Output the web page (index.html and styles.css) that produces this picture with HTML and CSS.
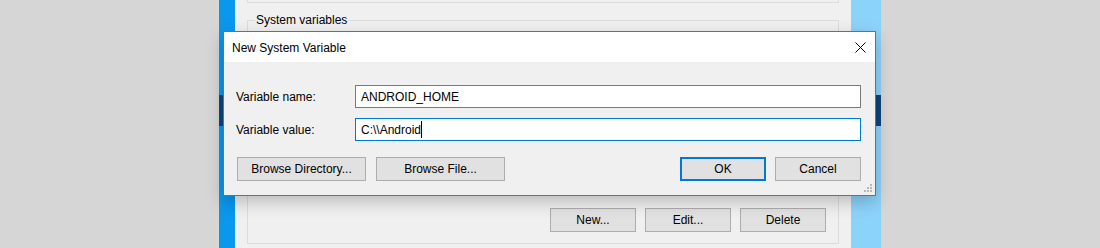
FILE: index.html
```html
<!DOCTYPE html>
<html lang="en">
<head>
  <meta charset="UTF-8">
  <title>New System Variable</title>
  <link rel="stylesheet" href="styles.css">
</head>
<body>
  <div class="desktop">
    <div class="window">
      <div class="prev-group"></div>
      <fieldset class="group">
        <legend>System variables</legend>
        <div class="var-list"></div>
        <div class="group-buttons">
          <button class="win-btn small">New...</button>
          <button class="win-btn small">Edit...</button>
          <button class="win-btn small">Delete</button>
        </div>
      </fieldset>
    </div>
  </div>

  <!-- dialog sits over the environment variables window -->
  <div class="dialog">
    <div class="title-bar">
      <span class="title">New System Variable</span>
      <svg class="close" width="11" height="11" viewBox="0 0 11 11">
        <path d="M0.5 0.5 L10.5 10.5 M10.5 0.5 L0.5 10.5" stroke="#000" stroke-width="1" fill="none"/>
      </svg>
    </div>
    <div class="dialog-body">
      <div class="field-row">
        <label for="var-name">Variable name:</label>
        <div class="text-input" id="var-name">ANDROID_HOME</div>
      </div>
      <div class="field-row">
        <label for="var-value">Variable value:</label>
        <div class="text-input focused" id="var-value">C:\\Android<span class="caret"></span></div>
      </div>
      <div class="button-row">
        <button class="win-btn wide">Browse Directory...</button>
        <button class="win-btn wide">Browse File...</button>
        <div class="spacer"></div>
        <button class="win-btn default">OK</button>
        <button class="win-btn">Cancel</button>
      </div>
    </div>
    <svg class="grip" width="8" height="8" viewBox="0 0 8 8">
      <rect x="6" y="0" width="2" height="2" fill="#b8b8b8"/>
      <rect x="3" y="3" width="2" height="2" fill="#b8b8b8"/>
      <rect x="6" y="3" width="2" height="2" fill="#b8b8b8"/>
      <rect x="0" y="6" width="2" height="2" fill="#b8b8b8"/>
      <rect x="3" y="6" width="2" height="2" fill="#b8b8b8"/>
      <rect x="6" y="6" width="2" height="2" fill="#b8b8b8"/>
    </svg>
  </div>
</body>
</html>
```

FILE: styles.css
```css
body {
  margin: 0;
  height: 248px;
  overflow: hidden;
  background-color: #d6d6d6;
  font-family: 'Liberation Sans', Arial, sans-serif;
  font-size: 12px;
  color: #000000;
  display: flex;
  justify-content: center;
}

/* blue desktop strip behind the window */
.desktop {
  width: 662px;
  height: 248px;
  display: flex;
  padding: 0 30px 0 16px;
  box-sizing: border-box;
  background:
    linear-gradient(to bottom, transparent 95px, #0b467c 95px, #0b467c 126px, transparent 126px),
    linear-gradient(to right, #0a97ee 0, #0a97ee 16px, #8cd3fa 632px, #8cd3fa 100%);
}

.window {
  flex: 1;
  background-color: #f0f0f0;
  padding: 0 12px;
  display: flex;
  flex-direction: column;
}

.prev-group {
  height: 2px;
  border: 1px solid #dcdcdc;
  border-top: none;
}

.group {
  margin: 9px 0 0 0;
  padding: 0 12px 11px 12px;
  border: 1px solid #dcdcdc;
  display: flex;
  flex-direction: column;
  min-width: 0;
}

.group legend {
  padding: 0 1px;
  margin-left: -5px;
  line-height: 16px;
  color: #000000;
}

.var-list {
  height: 180px;
}

.group-buttons {
  display: flex;
  justify-content: flex-end;
  gap: 9px;
}

/* standard Windows push button */
.win-btn {
  font-family: inherit;
  font-size: 12px;
  color: #000000;
  background-color: #e1e1e1;
  border: 1px solid #adadad;
  height: 24px;
  width: 86px;
  padding: 0;
  box-sizing: border-box;
}

.win-btn.wide {
  width: 129px;
}

.win-btn.default {
  border: 2px solid #0078d7;
}

/* the dialog */
.dialog {
  position: absolute;
  left: 223px;
  top: 31px;
  width: 653px;
  height: 165px;
  box-sizing: border-box;
  border: 1px solid #2a7fd4;
  background-color: #f0f0f0;
  box-shadow: 0 6px 16px rgba(0, 0, 0, 0.22);
  display: flex;
  flex-direction: column;
}

.title-bar {
  height: 30px;
  background-color: #ffffff;
  display: flex;
  align-items: center;
  padding: 0 9px 0 8px;
}

.title {
  flex: 1;
  padding-top: 1px;
}

.close {
  display: block;
}

.dialog-body {
  flex: 1;
  padding: 23px 14px 0 12px;
  display: flex;
  flex-direction: column;
}

.field-row {
  display: flex;
  align-items: center;
  height: 23px;
  margin-bottom: 10px;
}

.field-row label {
  width: 119px;
  flex-shrink: 0;
}

.text-input {
  flex: 1;
  height: 23px;
  box-sizing: border-box;
  border: 1px solid #7a7a7a;
  background-color: #ffffff;
  padding: 0 5px;
  display: flex;
  align-items: center;
}

.text-input.focused {
  border-color: #0078d7;
}

.caret {
  display: inline-block;
  width: 1px;
  height: 17px;
  background-color: #000000;
}

.button-row {
  display: flex;
  gap: 10px;
  margin-top: 6px;
  padding-left: 1px;
}

.button-row .spacer {
  flex: 1;
}

.button-row .default {
  margin-right: -1px;
}

.grip {
  position: absolute;
  right: 3px;
  bottom: 3px;
}
```
